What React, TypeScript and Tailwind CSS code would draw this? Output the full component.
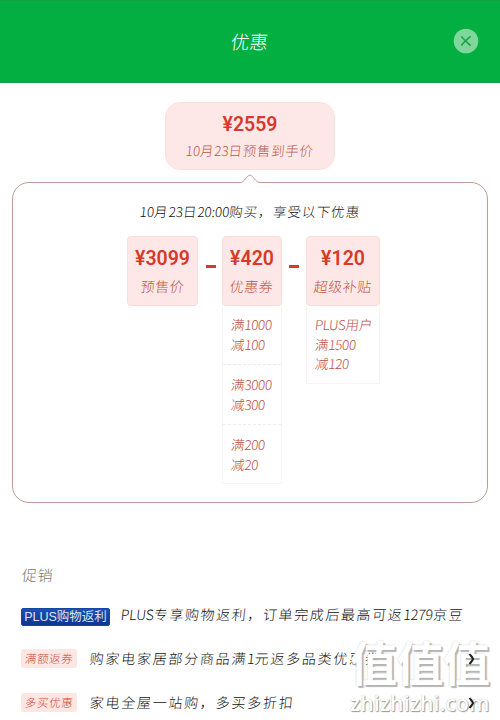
import React from "react";

const hand = "font-['Noto_Sans_CJK_SC',sans-serif] font-light";

type TxtProps = { children: string; className?: string; latin?: string };

// Ideographs and Latin runs carry different tracking.
function Txt({ children, className = "", latin = "tracking-[-0.1px]" }: TxtProps) {
  const parts = children.split(/([A-Za-z0-9:]+)/).filter(Boolean);
  return (
    <span className={`inline-block whitespace-nowrap -skew-x-6 ${hand} ${className}`}>
      {parts.map((p, i) =>
        /^[A-Za-z0-9:]/.test(p) ? (
          <span key={i} className={latin}>{p}</span>
        ) : (
          <span key={i}>{p}</span>
        )
      )}
    </span>
  );
}

function Price({ children }: { children: string }) {
  return (
    <div className="whitespace-nowrap font-['Roboto',sans-serif] text-[19.5px] leading-[24px] font-semibold text-[#d8392a]">
      {children}
    </div>
  );
}

function Card({ price, label, width }: { price: string; label: string; width: string }) {
  return (
    <div className={`flex h-[70px] flex-col items-center rounded-[4px] border border-[#fbdcda] bg-[#fee8e7] pt-[10px] ${width}`}>
      <Price>{price}</Price>
      <Txt className="mt-[5px] text-[14px] leading-[20px] tracking-[0.5px] text-[#c4513f]">{label}</Txt>
    </div>
  );
}

function Lines({ lines }: { lines: string[] }) {
  return (
    <div className="flex flex-col items-start pl-[8px] text-[#b9503f]">
      {lines.map((l) => (
        <Txt key={l} className="text-[13.5px] leading-[19.5px]" latin="tracking-[-0.4px]">{l}</Txt>
      ))}
    </div>
  );
}

function Minus() {
  return <div className="mt-[29px] h-[3px] w-[10px] bg-[#d8392a]" />;
}

function Tag({ children }: { children: string }) {
  return (
    <div className="flex h-[19px] w-[56px] items-center justify-center rounded-[2px] bg-[#fee6e3]">
      <Txt className="text-[11.5px] leading-[19px] tracking-[0.6px] text-[#cf4734]">{children}</Txt>
    </div>
  );
}

function Chevron() {
  return (
    <svg className="mr-[25px] ml-auto h-[12px] w-[7px]" viewBox="0 0 7 12" fill="none" stroke="#222" strokeWidth="2">
      <path d="M1.5 1C3 3 4.8 4.5 5 6C4.8 7.5 3 9 1.5 11" />
    </svg>
  );
}

export default function App() {
  return (
    <div className="relative h-[720px] w-[500px] overflow-hidden bg-white">
      <header className="grid h-[83px] grid-cols-[1fr_auto_1fr] items-center border-t border-b border-[#16a045] bg-[#03af41]">
        <span />
        <Txt className="mb-[1px] text-[18.5px] leading-[24px] text-white">优惠</Txt>
        <svg className="mr-[21px] mb-[1px] h-[26px] w-[26px] justify-self-end" viewBox="0 0 26 26">
          <circle cx="13" cy="13" r="12.3" fill="#7fd79c" />
          <path d="M8.4 8.4C10 11 15 15 17.6 17.6M17.6 8.4C15 10.5 10 15 8.4 17.6" fill="none" stroke="#20a350" strokeWidth="1.7" />
        </svg>
      </header>

      <section className="mx-auto mt-[19px] flex h-[68px] w-[170px] flex-col items-center rounded-[15px] border border-[#fde0de] bg-[#fee8e7] pt-[10px]">
        <Price>¥2559</Price>
        <Txt className="mt-[3px] text-[13.5px] leading-[20px] tracking-[0.7px] text-[#b8594b]">10月23日预售到手价</Txt>
      </section>

      <section className="relative mx-[12px] mt-[12px] h-[321px] rounded-[17px] border border-[#bd9d92]">
        <svg className="absolute -top-[9px] left-[227px] h-[10px] w-[20px]" viewBox="0 0 20 10">
          <path d="M0 9.5L0 8.5C3.5 8.5 6 4 8 2Q10 0 12 2C14 4 16.5 8.5 20 8.5V10H0Z" fill="#fff" />
          <path d="M0 8.5C3.5 8.5 6 4 8 2Q10 0 12 2C14 4 16.5 8.5 20 8.5" fill="none" stroke="#c69d95" />
        </svg>
        <div className="mt-[16px] flex justify-center">
          <Txt className="text-[13.5px] leading-[24px] tracking-[1.05px] text-[#111]">10月23日20:00购买，享受以下优惠</Txt>
        </div>
        <div className="mt-[13px] ml-[114px] flex items-start">
          <Card price="¥3099" label="预售价" width="w-[71px]" />
          <div className="ml-[8px]"><Minus /></div>
          <div className="ml-[6px] w-[60px]">
            <Card price="¥420" label="优惠券" width="w-[60px]" />
            <div className="h-[178px] w-[60px] border border-t-0 border-[#f9f3f2]">
              <div className="h-[59px] border-b border-dashed border-[#f0ebea] pt-[9px]"><Lines lines={["满1000", "减100"]} /></div>
              <div className="h-[60px] border-b border-dashed border-[#f0ebea] pt-[10px]"><Lines lines={["满3000", "减300"]} /></div>
              <div className="pt-[10px]"><Lines lines={["满200", "减20"]} /></div>
            </div>
          </div>
          <div className="ml-[7px]"><Minus /></div>
          <div className="ml-[7px] w-[74px]">
            <Card price="¥120" label="超级补贴" width="w-[74px]" />
            <div className="h-[78px] border border-t-0 border-[#f9f3f2] pt-[9px]">
              <Lines lines={["PLUS用户", "满1500", "减120"]} />
            </div>
          </div>
        </div>
      </section>

      <section className="pt-[62px] pl-[21px]">
        <div className="flex h-[20px] items-center">
          <Txt className="ml-[1px] text-[15px] leading-[20px] tracking-[0.6px] text-[#777]">促销</Txt>
        </div>
        <div className="mt-[17px] flex h-[24px] items-center">
          <div className="mt-[5px] flex h-[18px] w-[89px] items-center justify-center rounded-[2px] border border-[#1646a5] bg-linear-to-b from-[#1c50b8] to-[#0c3690] font-['Liberation_Sans','Noto_Sans_CJK_SC',sans-serif] text-[12.5px] leading-[16px] whitespace-nowrap text-[#dde3ea]">
            PLUS购物返利
          </div>
          <Txt className="ml-[11px] text-[14px] leading-[24px] tracking-[1.6px] text-[#111]">PLUS专享购物返利，订单完成后最高可返1279京豆</Txt>
        </div>
        <div className="mt-[20px] flex h-[24px] items-center">
          <Tag>满额返券</Tag>
          <Txt className="ml-[13px] text-[14px] leading-[24px] tracking-[1.75px] text-[#111]">购家电家居部分商品满1元返多品类优惠券</Txt>
        </div>
        <div className="mt-[20px] flex h-[24px] items-center">
          <Tag>多买优惠</Tag>
          <Txt className="ml-[13px] text-[14px] leading-[24px] tracking-[1.75px] text-[#111]">家电全屋一站购，多买多折扣</Txt>
        </div>
      </section>

      <div className="absolute top-[637px] left-[350px] w-[145px] whitespace-nowrap text-white">
        <div className="h-[54px] font-['Noto_Sans_CJK_SC',sans-serif] text-[47px] leading-[48px] font-bold tracking-[-0.5px] [text-shadow:2px_2px_1px_#b4b4b4,0_0_2px_#ccc]">值值值</div>
        <div className="font-['Open_Sans',sans-serif] text-[21px] leading-[24px] font-semibold tracking-[0.2px] [text-shadow:1px_1px_1px_#999,0_0_1px_#aaa]">zhizhizhi.com</div>
      </div>
      <div className="absolute top-[653px] right-0 flex w-[56px] flex-col gap-[32px]">
        <Chevron />
        <Chevron />
      </div>
    </div>
  );
}
